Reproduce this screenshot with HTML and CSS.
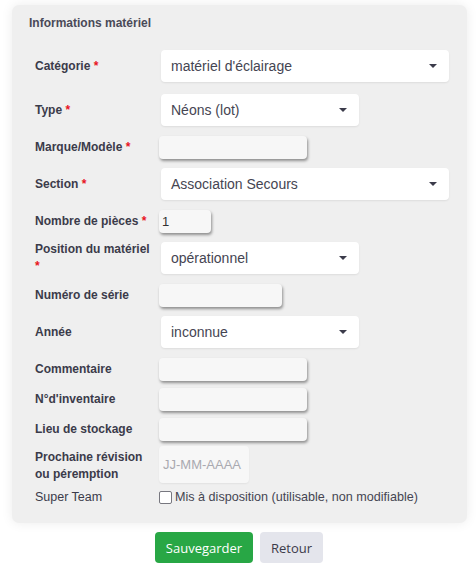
FILE: index.html
```html
<!DOCTYPE html>
<html lang="fr">
<head>
  <meta charset="UTF-8" />
  <meta name="viewport" content="width=device-width, initial-scale=1.0"/>
  <title>Matériel</title>
  <link rel="stylesheet" href="styles.css">
</head>
<body>

  <form class="fiche">
    <div class="panneau">
      <div class="titre">Informations matériel</div>

      <div class="ligne haute">
        <label>Catégorie <span class="req">*</span></label>
        <div class="choix large"><span>matériel d'éclairage</span><i class="fleche"></i></div>
      </div>

      <div class="ligne haute">
        <label>Type <span class="req">*</span></label>
        <div class="choix moyen"><span>Néons (lot)</span><i class="fleche"></i></div>
      </div>

      <div class="ligne">
        <label>Marque/Modèle <span class="req">*</span></label>
        <input class="champ" type="text">
      </div>

      <div class="ligne haute">
        <label>Section <span class="req">*</span></label>
        <div class="choix large"><span>Association Secours</span><i class="fleche"></i></div>
      </div>

      <div class="ligne">
        <label>Nombre de pièces <span class="req">*</span></label>
        <input class="champ petit" type="text" value="1">
      </div>

      <div class="ligne haute">
        <label>Position du matériel <span class="req">*</span></label>
        <div class="choix moyen"><span>opérationnel</span><i class="fleche"></i></div>
      </div>

      <div class="ligne">
        <label>Numéro de série</label>
        <input class="champ serie" type="text">
      </div>

      <div class="ligne haute">
        <label>Année</label>
        <div class="choix moyen"><span>inconnue</span><i class="fleche"></i></div>
      </div>

      <div class="ligne">
        <label>Commentaire</label>
        <input class="champ" type="text">
      </div>

      <div class="ligne">
        <label>N°d'inventaire</label>
        <input class="champ" type="text">
      </div>

      <div class="ligne">
        <label>Lieu de stockage</label>
        <input class="champ" type="text">
      </div>

      <div class="ligne haute">
        <label>Prochaine révision ou péremption</label>
        <input class="champ date" type="text" placeholder="JJ-MM-AAAA">
      </div>

      <div class="ligne case">
        <label class="normal">Super Team</label>
        <span class="coche"><span class="boite"></span>Mis à disposition (utilisable, non modifiable)</span>
      </div>
    </div>

    <div class="actions">
      <button type="button" class="btn vert">Sauvegarder</button>
      <button type="button" class="btn gris">Retour</button>
    </div>
  </form>

</body>
</html>
```

FILE: styles.css
```css
* {
  box-sizing: border-box;
  margin: 0;
  padding: 0;
}

body {
  font-family: 'Liberation Sans', Arial, sans-serif;
  background: #ffffff;
  color: #3b3b4a;
}

.panneau {
  margin: 5px 9px 0 12px;
  background: #efefef;
  border-radius: 7px;
  box-shadow: 0 0 12px rgba(0, 0, 0, 0.08);
  padding: 9px 0 17px 17px;
}

.titre {
  font-size: 12px;
  font-weight: bold;
  color: #4a4a58;
  height: 30px;
  line-height: 14px;
  padding-top: 2px;
}

.ligne {
  display: flex;
  align-items: center;
  height: 30px;
  padding-left: 6px;
}

.ligne.haute {
  height: 44px;
}

.ligne.case {
  height: 18px;
}

.ligne label {
  width: 124px;
  padding-right: 8px;
  font-size: 12px;
  font-weight: bold;
  line-height: 17px;
  color: #3b3b4a;
}

.ligne label.normal {
  font-weight: normal;
  font-size: 12.5px;
}

.req {
  color: #e8141e;
}

.choix {
  margin-left: 2px;
  height: 32px;
  background: #ffffff;
  border-radius: 4px;
  box-shadow: 0 1px 2px rgba(0, 0, 0, 0.08);
  display: flex;
  align-items: center;
  justify-content: space-between;
  padding: 0 12px 0 10px;
  font-size: 14px;
  color: #454552;
}

.choix.large {
  width: 288px;
}

.choix.moyen {
  width: 198px;
}

.fleche {
  width: 0;
  height: 0;
  border-left: 4px solid transparent;
  border-right: 4px solid transparent;
  border-top: 4px solid #3b3b4a;
}

.champ {
  width: 148px;
  height: 23px;
  border: none;
  outline: none;
  background: #f7f7f7;
  border-radius: 4px;
  box-shadow: 1px 2px 3px rgba(0, 0, 0, 0.4);
  font-family: 'Liberation Sans', Arial, sans-serif;
  font-size: 13px;
  color: #333;
  padding: 0 3px;
}

.champ.petit {
  width: 52px;
}

.champ.serie {
  width: 123px;
}

.champ.date {
  width: 90px;
  height: 37px;
  box-shadow: 0 1px 2px rgba(0, 0, 0, 0.06);
  padding: 0 4px;
  margin-top: -3px;
}

.champ.date::placeholder {
  color: #a9a9b0;
}

.coche {
  display: flex;
  align-items: center;
  font-size: 12.6px;
  color: #454552;
}

.boite {
  width: 13px;
  height: 13px;
  border: 1px solid #77777f;
  border-radius: 2px;
  background: #ffffff;
  margin-right: 3px;
}

.actions {
  display: flex;
  justify-content: center;
  gap: 7px;
  margin-top: 9px;
  padding-left: 2px;
}

.btn {
  border: none;
  border-radius: 4px;
  height: 31px;
  font-family: 'Open Sans', sans-serif;
  font-size: 13px;
  cursor: pointer;
}

.btn.vert {
  background: #28a745;
  color: #ffffff;
  width: 98px;
}

.btn.gris {
  background: #e4e5ec;
  color: #3b3b4a;
  width: 63px;
}
```
